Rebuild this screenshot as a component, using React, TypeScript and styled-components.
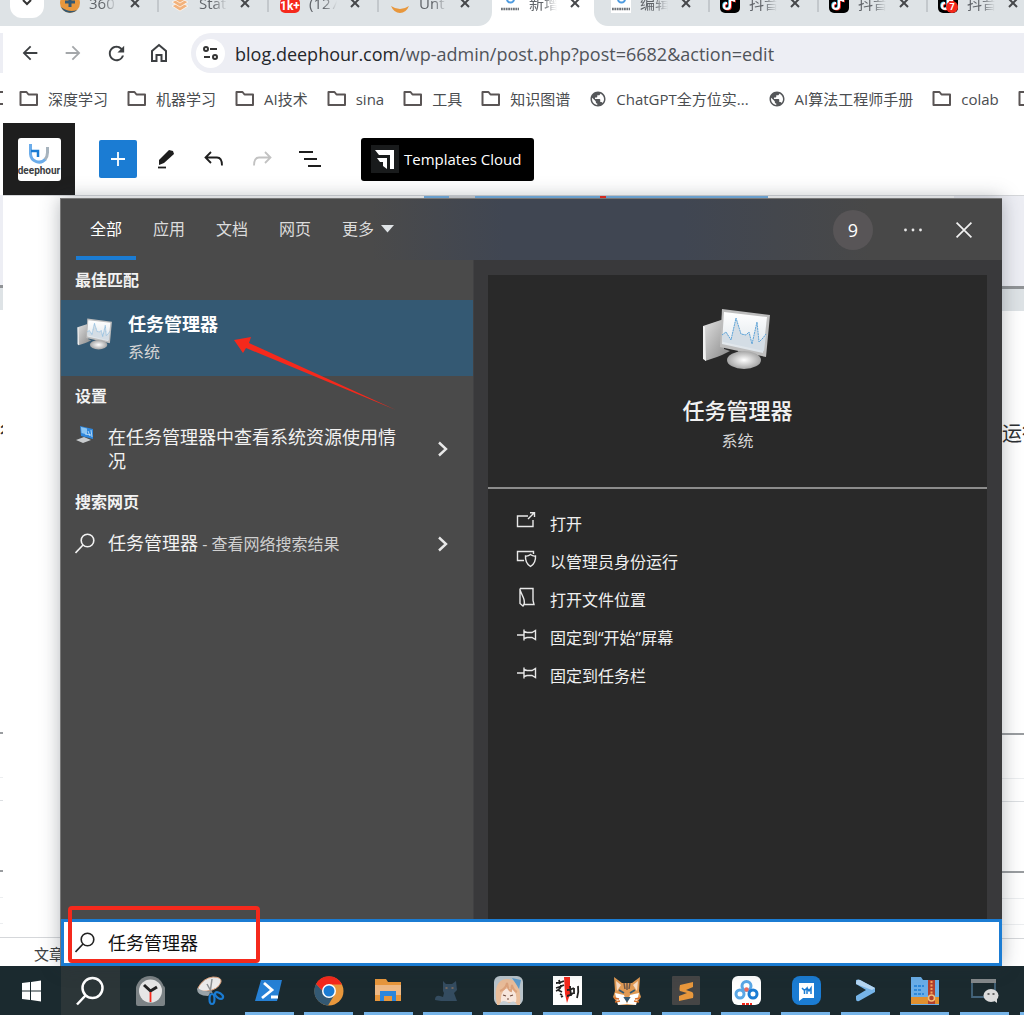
import React from "react";
import styled, { createGlobalStyle } from "styled-components";
import { MdArrowBack, MdArrowForward, MdRefresh, MdPublic } from "react-icons/md";

const GlobalStyle = createGlobalStyle`
  *, *::before, *::after { box-sizing: border-box; }
  body { margin: 0; font-family: "Open Sans", "Noto Sans", "Noto Sans CJK SC", sans-serif; background: #fff; }
  button, input { font: inherit; color: inherit; }
  button { border: 0; padding: 0; background: none; }
  svg { display: block; flex: none; }
  h2, h3, p, ul { margin: 0; padding: 0; font-weight: normal; }
  ul { list-style: none; }
`;

const Desktop = styled.div`
  position: relative;
  display: flex;
  flex-direction: column;
  min-height: 100vh;
  overflow: hidden;
`;

const Windows = styled.div`
  flex: 1;
  display: flex;
`;

/* sliver of the window that lies behind the browser */
const BackWindow = styled.div`
  width: 3px;
  flex: none;
  display: flex;
  flex-direction: column;
  overflow: hidden;
`;

const Block = styled.div<{ $h: number; $bg?: string }>`
  flex: none;
  height: ${(p) => p.$h}px;
  background: ${(p) => p.$bg ?? "#fff"};
`;

const Browser = styled.main`
  flex: 1;
  min-width: 0;
  display: flex;
  flex-direction: column;
`;

/* ---------- tab strip ---------- */

const TabStrip = styled.div`
  display: flex;
  height: 26px;
  background: #fff;
  overflow: hidden;
`;

const Tab = styled.div<{ $active?: boolean }>`
  flex: none;
  align-self: flex-end;
  display: flex;
  align-items: center;
  width: ${(p) => (p.$active ? 102 : 110)}px;
  height: 46px;
  padding-left: ${(p) => (p.$active ? 8 : 10)}px;
  color: #5f6368;
`;

const TabGroup = styled.div<{ $side: "left" | "right" }>`
  display: flex;
  align-items: flex-end;
  background: #dee3e6;
  height: 26px;
  flex: ${(p) => (p.$side === "left" ? "none" : "1 0 0")};
  min-width: 0;
  padding-left: 7px;
  padding-right: ${(p) => (p.$side === "left" ? "2px" : "0")};
  border-radius: ${(p) => (p.$side === "left" ? "0 0 14px 0" : "0 0 0 14px")};

  ${Tab} {
    width: ${(p) => (p.$side === "left" ? 110 : 109)}px;
  }
`;

const TabSearch = styled.button`
  width: 34px;
  height: 38px;
  margin: 0 6px 8px 0;
  border-radius: 12px;
  background: #fff;
  display: flex;
  align-items: center;
  justify-content: center;
  padding-top: 4px;
`;

const TabTitle = styled.span`
  width: 28px;
  margin: 0 11px 0 9px;
  overflow: hidden;
  white-space: nowrap;
  font-size: 15px;
  line-height: 22px;
  mask-image: linear-gradient(90deg, #000 50%, transparent 100%);
`;

const TabClose = styled.button`
  width: 14px;
  height: 14px;
  color: #46484b;
`;

const TabDivider = styled.span`
  width: 2px;
  height: 18px;
  margin-left: 15px;
  background: #c3c8cc;
`;

/* ---------- navigation ---------- */

const NavBar = styled.div`
  display: flex;
  align-items: center;
  height: 54px;
  padding-left: 15px;
`;

const NavButton = styled.button<{ $dim?: boolean }>`
  width: 24px;
  height: 24px;
  margin-right: 19px;
  display: flex;
  align-items: center;
  justify-content: center;
  color: ${(p) => (p.$dim ? "#a4a7aa" : "#3c3f42")};
`;

const AddressBar = styled.div`
  flex: 1;
  min-width: 0;
  display: flex;
  align-items: center;
  height: 40px;
  margin-left: 1px;
  padding-left: 5px;
  border-radius: 20px 0 0 20px;
  background: #edeef4;
`;

const SiteInfo = styled.button`
  width: 29px;
  height: 29px;
  border-radius: 50%;
  background: #fff;
  display: flex;
  align-items: center;
  justify-content: center;
`;

const Url = styled.p`
  margin-left: 10px;
  padding-top: 2px;
  font-size: 18px;
  line-height: 24px;
  color: #50545a;
  white-space: nowrap;
`;

const Host = styled.span`
  color: #24272b;
`;

const Bookmarks = styled.nav`
  display: flex;
  align-items: center;
  gap: 19px;
  height: 38px;
  padding-left: 16px;
  overflow: hidden;
`;

const Bookmark = styled.a`
  flex: none;
  display: flex;
  align-items: center;
  gap: 9px;
  font-size: 15px;
  line-height: 22px;
  color: #4a4d50;
  text-decoration: none;
  white-space: nowrap;
`;

/* ---------- editor ---------- */

const EditorBar = styled.div`
  display: flex;
  align-items: center;
  height: 78px;
  padding-top: 5px;
  border-bottom: 1px solid #d5d7da;
`;

const SiteHub = styled.a`
  width: 72px;
  height: 72px;
  background: #1e1e1e;
  display: flex;
  align-items: center;
  justify-content: center;
  margin-right: 24px;
  text-decoration: none;
`;

const SiteLogo = styled.span`
  width: 43px;
  height: 43px;
  border-radius: 3px;
  background: #fff;
  display: flex;
  flex-direction: column;
  align-items: center;
  overflow: hidden;
  padding-top: 5px;
  color: #3c4043;
  font-family: Roboto, sans-serif;
  font-weight: bold;
  font-size: 10px;
  line-height: 12px;
`;

const Inserter = styled.button`
  width: 38px;
  height: 38px;
  border-radius: 2px;
  background: #1b7cd3;
  display: flex;
  align-items: center;
  justify-content: center;
  margin-right: 15px;
`;

const EditorTool = styled.button`
  width: 28px;
  height: 28px;
  margin-right: 20px;
  display: flex;
  align-items: center;
  justify-content: center;
`;

const TemplatesCloud = styled.button`
  display: flex;
  align-items: center;
  gap: 5px;
  height: 43px;
  margin-left: 17px;
  padding: 0 13px 0 10px;
  border-radius: 3px;
  background: #000;
  color: #fff;
  font-size: 15px;
  line-height: 22px;
  white-space: nowrap;
`;

const EditorBody = styled.div`
  flex: 1;
  display: flex;
`;

const Canvas = styled.div`
  flex: 1;
  display: flex;
  flex-direction: column;
  justify-content: space-between;
`;

const CanvasMedia = styled.div`
  display: flex;
  height: 2px;
  padding-left: 421px;
`;

const Segment = styled.span<{ $w: number; $bg: string }>`
  width: ${(p) => p.$w}px;
  background: ${(p) => p.$bg};
`;

const Breadcrumb = styled.div`
  height: 29px;
  padding: 4px 0 0 31px;
  border-top: 1px solid #d5d7da;
  font-size: 15px;
  line-height: 24px;
  color: #3c3f42;
`;

const Side = styled.aside`
  width: 70px;
  display: flex;
  flex-direction: column;
  background: #fff;
`;

const CutText = styled.p<{ $align: "left" | "right" }>`
  flex: none;
  height: 30px;
  padding-left: ${(p) => (p.$align === "right" ? 48 : 0)}px;
  overflow: hidden;
  white-space: nowrap;
  font-size: 20px;
  line-height: 30px;
  color: #2c2f32;
`;

/* ---------- search flyout ---------- */

const Flyout = styled.section`
  position: absolute;
  left: 60px;
  right: 22px;
  top: 198px;
  bottom: 49px;
  display: flex;
  flex-direction: column;
  border-left: 1px solid #777;
  border-top: 1px solid #777;
  background: #4a4a4a;
  color: #f2f2f2;
  box-shadow: 0 0 18px rgba(40, 50, 60, 0.35);
`;

const FlyoutHeader = styled.header`
  display: flex;
  align-items: stretch;
  height: 61px;
  padding-left: 15px;
  padding-right: 24px;
  background: linear-gradient(90deg, #4a4a4a 33%, #404652 47%, #404652 66%, #484848 86%);
`;

const Scopes = styled.div`
  flex: 1;
  display: flex;
  gap: 3px;
`;

const Scope = styled.button<{ $active?: boolean }>`
  display: flex;
  align-items: center;
  gap: 7px;
  padding: 2px 14px 0;
  border-bottom: 4px solid ${(p) => (p.$active ? "#1b7cd3" : "transparent")};
  color: ${(p) => (p.$active ? "#fff" : "#dcdcdc")};
  font-size: 16px;
  line-height: 24px;
  white-space: nowrap;
`;

const HeaderActions = styled.div`
  display: flex;
  align-items: center;
  gap: 23px;
`;

const Rewards = styled.button`
  width: 40px;
  height: 40px;
  margin-right: 3px;
  border-radius: 50%;
  background: #585557;
  color: #fff;
  font-size: 18px;
  line-height: 40px;
`;

const HeaderButton = styled.button`
  width: 28px;
  height: 28px;
  display: flex;
  align-items: center;
  justify-content: center;
`;

const FlyoutBody = styled.div`
  flex: 1;
  display: flex;
`;

const Results = styled.div`
  width: 412px;
  flex: none;
`;

const GroupTitle = styled.h3`
  padding: 8px 14px;
  font-size: 16px;
  line-height: 24px;
  font-weight: bold;
`;

const BestMatch = styled.a`
  position: relative;
  display: flex;
  align-items: flex-start;
  gap: 14px;
  height: 76px;
  padding: 10px 16px;
  background: #345973;
  color: #fff;
  text-decoration: none;

  > svg:first-child { margin-top: 8px; }
`;

const MatchName = styled.p`
  font-size: 18px;
  line-height: 28px;
  font-weight: bold;
`;

const Kind = styled.p`
  font-size: 16px;
  line-height: 28px;
  color: #d5d5d5;
`;

const Pointer = styled.svg`
  position: absolute;
  left: 171px;
  top: 34px;
  z-index: 1;
`;

const ResultRow = styled.a`
  display: flex;
  align-items: center;
  padding: 9px 24px 9px 14px;
  color: #f2f2f2;
  text-decoration: none;
`;

const ResultIcon = styled.span<{ $top?: boolean }>`
  width: 21px;
  margin-right: 12px;
  align-self: ${(p) => (p.$top ? "flex-start" : "center")};
`;

const ResultText = styled.p`
  flex: 1;
  padding-right: 30px;
  font-size: 18px;
  line-height: 24px;
`;

const Hint = styled.span`
  font-size: 16px;
  color: #d0d0d0;
`;

const Preview = styled.div`
  flex: 1;
  display: flex;
  flex-direction: column;
  padding: 15px 15px 0 14px;
  background: #39393b;
  border-left: 1px solid #414143;
`;

const Card = styled.div`
  flex: 1;
  background: #292929;
`;

const CardHead = styled.div`
  display: flex;
  flex-direction: column;
  align-items: center;
  height: 214px;
  padding-top: 33px;
  border-bottom: 2px solid #8c8c8c;
`;

const AppName = styled.h2`
  margin-top: 23px;
  font-size: 22px;
  line-height: 34px;
  font-weight: 500;
`;

const ActionList = styled.ul`
  padding: 16px 28px;
`;

const Action = styled.button`
  display: flex;
  align-items: center;
  gap: 13px;
  height: 38px;
  font-size: 16px;
  line-height: 24px;
  color: #f0f0f0;
  white-space: nowrap;

  svg { margin-bottom: 6px; }
`;

const SearchBox = styled.label`
  display: flex;
  align-items: center;
  gap: 12px;
  height: 47px;
  padding-left: 11px;
  border: 3px solid #1b7cd3;
  background: #fff;
  color: #222;
`;

const SearchInput = styled.input`
  flex: 1;
  min-width: 0;
  padding: 0;
  border: 0;
  outline: 0;
  background: transparent;
  font-size: 18px;
  line-height: 28px;
  color: #111;
`;

const Highlight = styled.div`
  position: absolute;
  left: 7px;
  bottom: 3px;
  width: 192px;
  height: 57px;
  border: 4px solid #f5291c;
  border-radius: 4px;
  pointer-events: none;
`;

/* ---------- taskbar ---------- */

const Taskbar = styled.footer`
  display: flex;
  height: 49px;
  padding-left: 1px;
  background: #1b2a2f;
`;

const TaskItem = styled.button<{ $open?: boolean; $active?: boolean }>`
  flex: 1;
  min-width: 0;
  display: flex;
  flex-direction: column;
  align-items: center;
  justify-content: space-between;
  padding-top: 10px;
  background: ${(p) => (p.$active ? "#2c3638" : "transparent")};

  &::after {
    content: "";
    width: 49px;
    height: 3px;
    background: ${(p) => (p.$open ? "#76b4e8" : "transparent")};
  }
`;

const TaskOverflow = styled.span`
  width: 4px;
  height: 3px;
  margin-left: 6px;
  align-self: flex-end;
  background: #76b4e8;
`;

/* ---------- drawings ---------- */

const Cross = ({ size = 14, w = 2 }: { size?: number; w?: number }) => (
  <svg width={size} height={size} viewBox="0 0 14 14" stroke="currentColor" strokeWidth={w} fill="none">
    <path d="M3 3l8 8M11 3l-8 8" />
  </svg>
);

const Folder = () => (
  <svg width="20" height="18" viewBox="0 0 20 18" fill="none" stroke="#5a5555" strokeWidth="2" strokeLinejoin="round">
    <path d="M1.500 2h6l2 2.500h8.500v10.500h-16.500z" />
  </svg>
);

const Lens = ({ size = 21, w = 1.6 }: { size?: number; w?: number }) => (
  <svg width={size} height={size} viewBox="0 0 21 21" fill="none" stroke="currentColor" strokeWidth={w}>
    <circle cx="12.500" cy="7.500" r="6.300" />
    <path d="M8 12L.5 20" />
  </svg>
);

const Chevron = () => (
  <svg width="12" height="16" viewBox="0 0 12 16" fill="none" stroke="#e8e8e8" strokeWidth="2.400">
    <path d="M2 1.500L9 8l-7 6.500" />
  </svg>
);

const HourMark = ({ size }: { size: number }) => (
  <svg width={size} height={size} viewBox="0 0 22 22" fill="none" strokeWidth="3">
    <path d="M2.500 1v10a8.500 8.500 0 0 0 15 5" stroke="#6bacea" />
    <path d="M17 16.500q2.500-3 2.500-7V4" stroke="#a7b3bd" />
    <path d="M3 8h7v6" stroke="#1b7cd3" strokeWidth="2.500" />
  </svg>
);

const LogoFavicon = () => (
  <svg width="20" height="20" viewBox="0 0 20 20">
    <rect width="20" height="20" fill="#fff" />
    <path d="M7 2v4a3.500 3.500 0 0 0 7 0V3" fill="none" stroke="#4d9be0" strokeWidth="2" />
    <path d="M1 16h18" stroke="#70757a" strokeWidth="2.500" strokeDasharray="1.800 .6" />
  </svg>
);

const PlusFavicon = () => (
  <svg width="20" height="20" viewBox="0 0 20 20">
    <circle cx="10" cy="10" r="10" fill="#e8973c" />
    <path d="M1 14a10 10 0 0 0 16 3q-8 3-16-3z" fill="#345973" />
    <path d="M10 4v10M5 9h10" stroke="#345973" strokeWidth="3" />
  </svg>
);

const StackFavicon = () => (
  <svg width="20" height="20" viewBox="0 0 20 20" fill="#f2b27c" stroke="#fff" strokeWidth=".7">
    <path d="M2 13l8-4 8 4-8 5z" />
    <path d="M2 9l8-4 8 4-8 5z" />
    <path d="M2 5l8-4 8 4-8 5z" />
  </svg>
);

const CountFavicon = () => (
  <svg width="20" height="20" viewBox="0 0 20 20">
    <rect y="5" width="20" height="15" rx="5" fill="#f5291c" />
    <text x="10" y="17" textAnchor="middle" fontSize="12" fontWeight="bold" fontFamily="Roboto, sans-serif" fill="#fff">1k+</text>
  </svg>
);

const ArcFavicon = () => (
  <svg width="20" height="20" viewBox="0 0 20 20">
    <path d="M1 13q9 6 18 0-3 7-9 7t-9-7z" fill="#e8973c" />
  </svg>
);

const TikFavicon = ({ badge }: { badge?: boolean }) => (
  <svg width="20" height="20" viewBox="0 0 20 20">
    <rect width="20" height="20" rx="5" fill="#000" />
    <g fill="none" strokeWidth="2">
      <path d="M10 4v9a3 3 0 1 1-3-3" stroke="#52c8e8" transform="translate(-.8 -.6)" />
      <path d="M10 4v9a3 3 0 1 1-3-3M10 4q1 3 5 4" stroke="#f5291c" transform="translate(.9 .6)" />
      <path d="M10 4v9a3 3 0 1 1-3-3M10 4q1 3 5 4" stroke="#fff" />
    </g>
    {badge && (
      <>
        <circle cx="14" cy="14" r="6" fill="#f5291c" />
        <text x="14" y="17" textAnchor="middle" fontSize="9" fontWeight="bold" fontFamily="Roboto, sans-serif" fill="#fff">7</text>
      </>
    )}
  </svg>
);

const TaskManager = ({ width, height }: { width: number; height: number }) => (
  <svg width={width} height={height} viewBox="0 0 72 62">
    <defs>
      <linearGradient id="case" x1="0" x2="1" y1="0" y2="1">
        <stop offset="0" stopColor="#e3e3e3" />
        <stop offset="1" stopColor="#858585" />
      </linearGradient>
      <linearGradient id="screen" x1="0" x2="0" y1="0" y2="1">
        <stop offset="0" stopColor="#fff" />
        <stop offset="1" stopColor="#dbe2e8" />
      </linearGradient>
      <radialGradient id="foot">
        <stop offset="0" stopColor="#fff" />
        <stop offset="1" stopColor="#a5a5a5" />
      </radialGradient>
    </defs>
    <path d="M1 18l21-7v30l6 2-8 4-5 2-12 4z" fill="url(#case)" />
    <path d="M1 18l2 1 1 34-3-2z" fill="#f0f0f0" />
    <path d="M36 42h14v8H36z" fill="#8e8e8e" />
    <path d="M20 1l48 6-4 42-46-10z" fill="#bdbdbd" />
    <path d="M22 4l43 5-4 36-41-9z" fill="url(#screen)" />
    <ellipse cx="42" cy="52" rx="17" ry="9" fill="url(#foot)" />
    <path d="M20 27l4-3 5 8 5-22 5 16 5 1 3-3 3 12 5-22 2 20 4-4 3-4-2 17-41-9z" fill="#d4dde5" />
    <path d="M20 27l4-3 5 8 5-22 5 16 5 1 3-3 3 12 5-22 2 20 4-4 3-4" fill="none" stroke="#5ba2d8" strokeWidth="1" strokeDasharray="2 .6" />
  </svg>
);

const Laptop = () => (
  <svg width="21" height="20" viewBox="0 0 21 20">
    <path d="M1 15l8-3 7 3-8 3z" fill="#c9ccce" />
    <path d="M5 1l13 3v10L6 11z" fill="#2f87dc" />
    <path d="M6 2l6 1.500v6L6.500 8z" fill="#8cc5f2" />
    <path d="M13 6l2 5M10 9l6 1M16 5l1 7" stroke="#cde6fa" strokeWidth=".8" />
  </svg>
);

const line = { fill: "none", stroke: "#e8e8e8", strokeWidth: 1.4 } as const;

const OpenIcon = () => (
  <svg width="21" height="20" viewBox="0 0 21 20" {...line}>
    <path d="M12 5H1.500v10.500h15.500V9M12 8l6-6M14 1.700h4.500V6" />
  </svg>
);
const AdminIcon = () => (
  <svg width="21" height="20" viewBox="0 0 21 20" {...line}>
    <path d="M8 11.500H1.500v-9h16V5" />
    <path d="M14.500 5.500q2.500 2 5 1.500 .5 7-5 10.500-5.500-3.500-5-10.500 2.500 .5 5-1.500z" />
  </svg>
);
const LocationIcon = () => (
  <svg width="21" height="20" viewBox="0 0 21 20" {...line}>
    <path d="M4 1.500h13v12l1 4H8M4 1.500v15l3 2.500q2.500-3 .5-8L4 3" />
  </svg>
);
const PinIcon = () => (
  <svg width="21" height="20" viewBox="0 0 21 20" {...line}>
    <path d="M1 10h7M8 4.500v11M8 6.500l3 1h5l3.500-2v9l-3.500-2h-5l-3 1" />
  </svg>
);

const T = ({ children }: { children: React.ReactNode }) => (
  <svg width="30" height="30" viewBox="0 0 30 30">{children}</svg>
);

const taskIcons: { name: string; open?: boolean; active?: boolean; art: React.ReactNode }[] = [
  { name: "Start", art: <T><path fill="#fff" d="M6 7l8-1v8.500H6zM15 6l10-1.500v10H15zM6 15.500h8V24l-8-1zM15 15.500h10V25.500L15 24z" /></T> },
  { name: "Search", active: true, art: <T><g fill="none" stroke="#fff" strokeWidth="2.500"><circle cx="17.500" cy="12" r="10" /><path d="M10.500 19.500L2 28.500" /></g></T> },
  {
    name: "Clock", art: <T>
      <rect x="1" y="10" width="29" height="20" rx="2" fill="#7c8386" /><circle cx="15" cy="14" r="14" fill="#7c8386" />
      <circle cx="15.500" cy="15" r="11.500" fill="#e6e6e6" /><path d="M9 9l6.500 6L22 11" fill="none" stroke="#222" strokeWidth="3" /><path d="M15.500 16v10" stroke="#f5291c" strokeWidth="1.800" />
    </T>,
  },
  {
    name: "Snipping tool", art: <T>
      <path d="M3 12q5-10 15-11 9 0 8 5-3 8-14 9-9 1-9-3z" fill="#ececec" stroke="#e0a27c" /><path d="M2 13q1-2 2 0 5 3 11 2 0 4-2 5-11 0-11-7z" fill="#9aa3a8" />
      <path d="M17 3l-2 14M12 8l5 9" stroke="#8b8f92" strokeWidth="1.500" /><g fill="none" stroke="#1b7cd3" strokeWidth="2.200"><ellipse cx="17" cy="23" rx="2.500" ry="5" /><ellipse cx="24" cy="19.500" rx="4.500" ry="2.500" transform="rotate(35 24 19.500)" /></g>
    </T>,
  },
  { name: "PowerShell", open: true, art: <T><path d="M7 4h21l-5 21H1z" fill="#2681d6" /><path d="M10 7l8 7-10 8M17 21h7" fill="none" stroke="#fff" strokeWidth="2.800" /></T> },
  {
    name: "Chrome", open: true, art: <T>
      <circle cx="15" cy="15" r="14.500" fill="#e8973c" /><path d="M2 8A14.500 14.500 0 0 1 28 8.500H15l-6 7z" fill="#f5291c" /><path d="M2 8A14.500 14.500 0 0 0 14 29.500l6-10-11-4z" fill="#345973" />
      <circle cx="15" cy="15" r="7" fill="#fff" /><circle cx="15" cy="15" r="5.500" fill="#1b7cd3" />
    </T>,
  },
  { name: "Explorer", open: true, art: <T><path d="M2 3h11l2 3h13v19H2z" fill="#e8973c" /><path d="M2 9h26v10H2z" fill="#efb984" /><path d="M7 25V15h16v10h-4v-5h-8v5z" fill="#2b86dc" /></T> },
  { name: "Clash", open: true, art: <T><path d="M10 5l3 3h6l4-3 1 9-3 3 3 8H8l-6-1q0-5 5-4l3 1 1-4-1-2z" fill="#344c60" /><path d="M12.500 12h2M18.500 12h2" stroke="#b0805a" strokeWidth="1.200" /></T> },
  {
    name: "Portrait", open: true, art: <T>
      <rect x="1" width="29" height="29" rx="6" fill="#b9c4cb" /><path d="M4 29Q-1 5 13 3q16-1 14 26z" fill="#e9bd9a" /><path d="M8 26q-1-13 8-14 9 2 7 14z" fill="#f7e6dc" /><path d="M19 2l9 2-2 9-3-5z" fill="#5d9bcb" /><path d="M7 15q6-2 7-8 1 7 4 8l1-6q1 5 5 7" fill="none" stroke="#dba27c" strokeWidth="2" />
      <path d="M10 19l3 1M20 19l-3 1M14 23h2" stroke="#704a3c" strokeWidth="1.200" /><path d="M6 29q3-7 10-2 6-4 8 2z" fill="#c4cdd4" />
    </T>,
  },
  {
    name: "Calligraphy", open: true, art: <T>
      <path d="M1 0h29v29H1z" fill="#fff" /><path d="M12 1h6v17l-3 9-2-9z" fill="#f5291c" /><g fill="none" stroke="#222" strokeWidth="1.800"><path d="M4 7q4 0 8-2M7 4l1 4M4 12q4-1 8-3M9 9q0 4-5 6M6 14l4 2M8 18l2 1M9 21l2-1M15 14q4 0 7-2M18 10l1 10M15 20q3 0 6-3M22 12v6M26 10q1 6-1 12" /></g>
    </T>,
  },
  {
    name: "Fox", open: true, art: <T>
      <path d="M2 1l8 6h10l8-6-1 14 2 6-6 8H7l-6-8 2-6z" fill="#e09a54" /><path d="M4 5l5 4-4 6zM26 5l-5 4 4 6z" fill="#f7dcc4" /><path d="M3 17l9 2 3 9-9 1zM27 17l-9 2-3 9 9 1z" fill="#fff" /><path d="M12 7l1 6M15 7v7M18 7l-1 6" stroke="#6d5648" strokeWidth="1.500" /><path d="M7 14l5 3M23 14l-5 3M13 22h4l-2 3z" stroke="#345973" fill="#345973" strokeWidth="1.800" /><path d="M2 22l5 1M28 22l-5 1M3 26l5-1M27 26l-5-1" stroke="#d8702c" strokeWidth="1.500" />
    </T>,
  },
  { name: "Sublime Text", open: true, art: <T><rect x="1" width="28" height="29" rx="1" fill="#454545" /><path d="M9 9l13-3v5l-7 3 6 2q2 1 1 6L8 25v-5l8-3-7-2q-1-1 0-6z" fill="#e8973c" /></T> },
  {
    name: "Netdisk", open: true, art: <T>
      <rect x="1" width="29" height="29" rx="6" fill="#fff" /><g fill="none" strokeWidth="3"><circle cx="15.500" cy="10" r="4.500" stroke="#5aa7e6" /><circle cx="9" cy="18" r="4" stroke="#5aa7e6" /><circle cx="22" cy="18" r="4" stroke="#1b7cd3" /></g><circle cx="15.500" cy="13.500" r="2.200" fill="#f06a5e" /><path d="M11 28h10" stroke="#f5291c" strokeWidth="2" strokeDasharray="3 1" />
    </T>,
  },
  { name: "Messenger", open: true, art: <T><rect x="1" width="29" height="29" rx="8" fill="#1b7cd3" /><path d="M8 7h15v15H12l-4 3z" fill="#fff" /><path d="M11 12l2.500 2.500V18M13.500 14.500L16 12v6M16 12l2 3 2-3v6" fill="none" stroke="#1b7cd3" strokeWidth="1.500" /></T> },
  { name: "Remote shell", open: true, art: <T><path d="M6 4q2-1 4 0l15 8v4L9 25q-3 1-3-2v-3l10-6L6 8z" fill="#76b4e8" /><path d="M6 8q0-5 4-4l15 8-3 2z" fill="#b5d6f2" /></T> },
  {
    name: "Archive", open: true, art: <T>
      <path d="M1 1h10l2 3h16v25H1z" fill="#6aaee8" /><path d="M4 10h10M4 14h8M4 18h10" stroke="#1b7cd3" strokeWidth="1.500" strokeDasharray="3 1" /><path d="M1 21h28v7H1z" fill="#e0902f" /><path d="M18 4h7v24h-7z" fill="#b3402c" /><path d="M21.500 5v14" stroke="#f5a45c" strokeWidth="2" strokeDasharray="2 1.500" /><circle cx="21.500" cy="22" r="3" fill="none" stroke="#f3c07a" strokeWidth="1.500" />
    </T>,
  },
  {
    name: "WeChat window", open: true, art: <T>
      <path d="M3 4h23v17H3z" fill="none" stroke="#44647c" strokeWidth="1.800" /><path d="M2 3h25v4H2z" fill="#85898b" /><ellipse cx="22" cy="19.500" rx="7.500" ry="6.500" fill="#dcdcdc" /><path d="M24 24l4 3v-5z" fill="#dcdcdc" /><path d="M18.500 18h2M23.500 18h2" stroke="#666" strokeWidth="2" />
    </T>,
  },
];

/* ---------- data ---------- */

type TabInfo = { title: string; icon: React.ReactNode; divider?: boolean };

const tabsBefore: TabInfo[] = [
  { title: "360", icon: <PlusFavicon />, divider: true },
  { title: "Stat", icon: <StackFavicon />, divider: true },
  { title: "(127", icon: <CountFavicon />, divider: true },
  { title: "Unt", icon: <ArcFavicon /> },
];
const tabsAfter: TabInfo[] = [
  { title: "编辑", icon: <LogoFavicon />, divider: true },
  { title: "抖音", icon: <TikFavicon />, divider: true },
  { title: "抖音", icon: <TikFavicon />, divider: true },
  { title: "抖音", icon: <TikFavicon badge /> },
];

const bookmarks: { title: string; site?: boolean }[] = [
  { title: "深度学习" },
  { title: "机器学习" },
  { title: "AI技术" },
  { title: "sina" },
  { title: "工具" },
  { title: "知识图谱" },
  { title: "ChatGPT全方位实...", site: true },
  { title: "AI算法工程师手册", site: true },
  { title: "colab" },
  { title: "" },
];

const actions = [
  { title: "打开", icon: <OpenIcon /> },
  { title: "以管理员身份运行", icon: <AdminIcon /> },
  { title: "打开文件位置", icon: <LocationIcon /> },
  { title: "固定到“开始”屏幕", icon: <PinIcon /> },
  { title: "固定到任务栏", icon: <PinIcon /> },
];

const BrowserTab = ({ tab, active }: { tab: TabInfo; active?: boolean }) => (
  <Tab $active={active}>
    {tab.icon}
    <TabTitle>{tab.title}</TabTitle>
    <TabClose aria-label="关闭标签页"><Cross /></TabClose>
    {tab.divider && <TabDivider />}
  </Tab>
);

/* bands of the page that show on both sides of the flyout */
const PageBands = ({ text, align }: { text: string; align: "left" | "right" }) => (
  <>
    <Block $h={90} $bg="#edeef4" />
    <Block $h={3} $bg="#909396" />
    <Block $h={22} $bg="#dee3e6" />
    <Block $h={108} />
    <CutText $align={align}>{text}</CutText>
    <Block $h={284} />
    <Block $h={2} $bg="#9a9da0" />
    <Block $h={43} />
    <Block $h={1} $bg="#eceef0" />
    <Block $h={22} />
    <Block $h={1} $bg="#dcdfe2" />
    <Block $h={69} />
    <Block $h={2} $bg="#9a9da0" />
    <Block $h={25} />
    <Block $h={1} $bg="#eceef0" />
    <Block $h={25} />
    <Block $h={1} $bg="#eceef0" />
    <Block $h={13} />
    <Block $h={1} $bg="#d5d7da" />
  </>
);

export default function App() {
  const [query, setQuery] = React.useState("任务管理器");

  return (
    <Desktop>
      <GlobalStyle />
      <Windows>
        <BackWindow>
          <Block $h={26} $bg="#dee3e6" />
          <Block $h={7} />
          <Block $h={40} $bg="#edeef4" />
          <Block $h={18} />
          <Block $h={2} $bg="#5a5555" />
          <Block $h={10} />
          <Block $h={2} $bg="#5a5555" />
          <Block $h={90} />
          <PageBands text="行" align="left" />
        </BackWindow>
        <Browser>
          <TabStrip>
            <TabGroup $side="left">
              <TabSearch aria-label="搜索标签页">
                <svg width="14" height="14" viewBox="0 0 14 14" fill="none" stroke="#333" strokeWidth="2"><path d="M3 6l4 4 4-4" /></svg>
              </TabSearch>
              {tabsBefore.map((t) => <BrowserTab key={t.title} tab={t} />)}
            </TabGroup>
            <BrowserTab tab={{ title: "新增", icon: <LogoFavicon /> }} active />
            <TabGroup $side="right">
              {tabsAfter.map((t, i) => <BrowserTab key={i} tab={t} />)}
            </TabGroup>
          </TabStrip>
          <NavBar>
            <NavButton aria-label="后退"><MdArrowBack size={22} /></NavButton>
            <NavButton $dim aria-label="前进"><MdArrowForward size={22} /></NavButton>
            <NavButton aria-label="刷新"><MdRefresh size={23} /></NavButton>
            <NavButton aria-label="主页">
              <svg width="18" height="20" viewBox="0 0 18 20" fill="none" stroke="currentColor" strokeWidth="2"><path d="M2 8l7-6 7 6v10h-4.500v-6h-5v6H2z" /></svg>
            </NavButton>
            <AddressBar>
              <SiteInfo aria-label="网站信息">
                <svg width="17" height="16" viewBox="0 0 17 16" fill="none" stroke="#333" strokeWidth="2"><circle cx="4" cy="4" r="2" /><path d="M8 4h7M2 12h6" /><circle cx="13" cy="12" r="2" /></svg>
              </SiteInfo>
              <Url><Host>blog.deephour.com</Host>/wp-admin/post.php?post=6682&amp;action=edit</Url>
            </AddressBar>
          </NavBar>
          <Bookmarks>
            {bookmarks.map((b, i) => (
              <Bookmark key={i} href="#" aria-label={b.title || "书签"}>
                {b.site ? <MdPublic size={18} color="#55575a" /> : <Folder />}
                {b.title}
              </Bookmark>
            ))}
          </Bookmarks>
          <EditorBar>
            <SiteHub href="#"><SiteLogo><HourMark size={22} />deephour</SiteLogo></SiteHub>
            <Inserter aria-label="插入区块">
              <svg width="16" height="16" viewBox="0 0 16 16" stroke="#fff" strokeWidth="1.800"><path d="M8 1v14M1 8h14" /></svg>
            </Inserter>
            <EditorTool aria-label="编辑">
              <svg width="20" height="22" viewBox="0 0 20 22"><path d="M3 12L13 2l4 1 1 3L8 15l-5 2z" fill="#1e1e1e" /><path d="M2 19.500h8" stroke="#1e1e1e" strokeWidth="1.800" /></svg>
            </EditorTool>
            <EditorTool aria-label="撤销">
              <svg width="20" height="18" viewBox="0 0 20 18" fill="none" stroke="#1e1e1e" strokeWidth="1.800"><path d="M7 2L1.500 7.500 7 13M2 7.500h11q5 0 5 8" /></svg>
            </EditorTool>
            <EditorTool aria-label="重做">
              <svg width="20" height="18" viewBox="0 0 20 18" fill="none" stroke="#c2c2c2" strokeWidth="1.800"><path d="M13 2l5.500 5.500L13 13M18 7.500H7q-5 0-5 8" /></svg>
            </EditorTool>
            <EditorTool aria-label="文档概览">
              <svg width="22" height="18" viewBox="0 0 22 18" stroke="#1e1e1e" strokeWidth="1.800"><path d="M0 2h14M5 9h13M9 16h13" /></svg>
            </EditorTool>
            <TemplatesCloud>
              <svg width="28" height="28" viewBox="0 0 28 28"><path d="M0 0h28v28H0z" fill="#191b1c" /><path d="M4 5h19v19h-4V10H8zM6 13h10v11l-4-3v-4h-3z" fill="#fff" /></svg>
              Templates Cloud
            </TemplatesCloud>
          </EditorBar>
          <EditorBody>
            <Canvas>
              <CanvasMedia>
                <Segment $w={25} $bg="#76b4e8" />
                <Segment $w={26} $bg="#d5d7da" />
                <Segment $w={125} $bg="#76b4e8" />
                <Segment $w={6} $bg="#f5291c" />
                <Segment $w={162} $bg="#76b4e8" />
              </CanvasMedia>
              <Breadcrumb>文章</Breadcrumb>
            </Canvas>
            <Side><PageBands text="运行" align="right" /></Side>
          </EditorBody>
        </Browser>
      </Windows>

      <Taskbar>
        {taskIcons.map((t) => (
          <TaskItem key={t.name} aria-label={t.name} $open={t.open} $active={t.active}>{t.art}</TaskItem>
        ))}
        <TaskOverflow />
      </Taskbar>

      <Flyout>
        <FlyoutHeader>
          <Scopes>
            <Scope $active>全部</Scope>
            <Scope>应用</Scope>
            <Scope>文档</Scope>
            <Scope>网页</Scope>
            <Scope>
              更多
              <svg width="13" height="8" viewBox="0 0 13 8"><path d="M0 0h13L6.500 7.500z" fill="#dfe3e6" /></svg>
            </Scope>
          </Scopes>
          <HeaderActions>
            <Rewards>9</Rewards>
            <HeaderButton aria-label="选项">
              <svg width="18" height="4" viewBox="0 0 18 4" fill="#e8e8e8"><circle cx="1.500" cy="2" r="1.400" /><circle cx="9" cy="2" r="1.400" /><circle cx="16.500" cy="2" r="1.400" /></svg>
            </HeaderButton>
            <HeaderButton aria-label="关闭"><Cross size={26} w={0.9} /></HeaderButton>
          </HeaderActions>
        </FlyoutHeader>
        <FlyoutBody>
          <Results>
            <GroupTitle>最佳匹配</GroupTitle>
            <BestMatch href="#">
              <TaskManager width={37} height={32} />
              <div>
                <MatchName>任务管理器</MatchName>
                <Kind>系统</Kind>
              </div>
              <Pointer width="166" height="78" viewBox="0 0 166 78"><path d="M2 6l17-3-2 6 147 67L14 14l-3 5z" fill="#f5291c" /></Pointer>
            </BestMatch>
            <GroupTitle>设置</GroupTitle>
            <ResultRow href="#">
              <ResultIcon $top><Laptop /></ResultIcon>
              <ResultText>在任务管理器中查看系统资源使用情况</ResultText>
              <Chevron />
            </ResultRow>
            <GroupTitle>搜索网页</GroupTitle>
            <ResultRow href="#">
              <ResultIcon><Lens /></ResultIcon>
              <ResultText>任务管理器<Hint> - 查看网络搜索结果</Hint></ResultText>
              <Chevron />
            </ResultRow>
          </Results>
          <Preview>
            <Card>
              <CardHead>
                <TaskManager width={72} height={62} />
                <AppName>任务管理器</AppName>
                <Kind>系统</Kind>
              </CardHead>
              <ActionList>
                {actions.map((a) => (
                  <li key={a.title}><Action>{a.icon}{a.title}</Action></li>
                ))}
              </ActionList>
            </Card>
          </Preview>
        </FlyoutBody>
        <SearchBox>
          <Lens />
          <SearchInput aria-label="搜索" value={query} onChange={(e) => setQuery(e.target.value)} />
        </SearchBox>
        <Highlight />
      </Flyout>
    </Desktop>
  );
}
